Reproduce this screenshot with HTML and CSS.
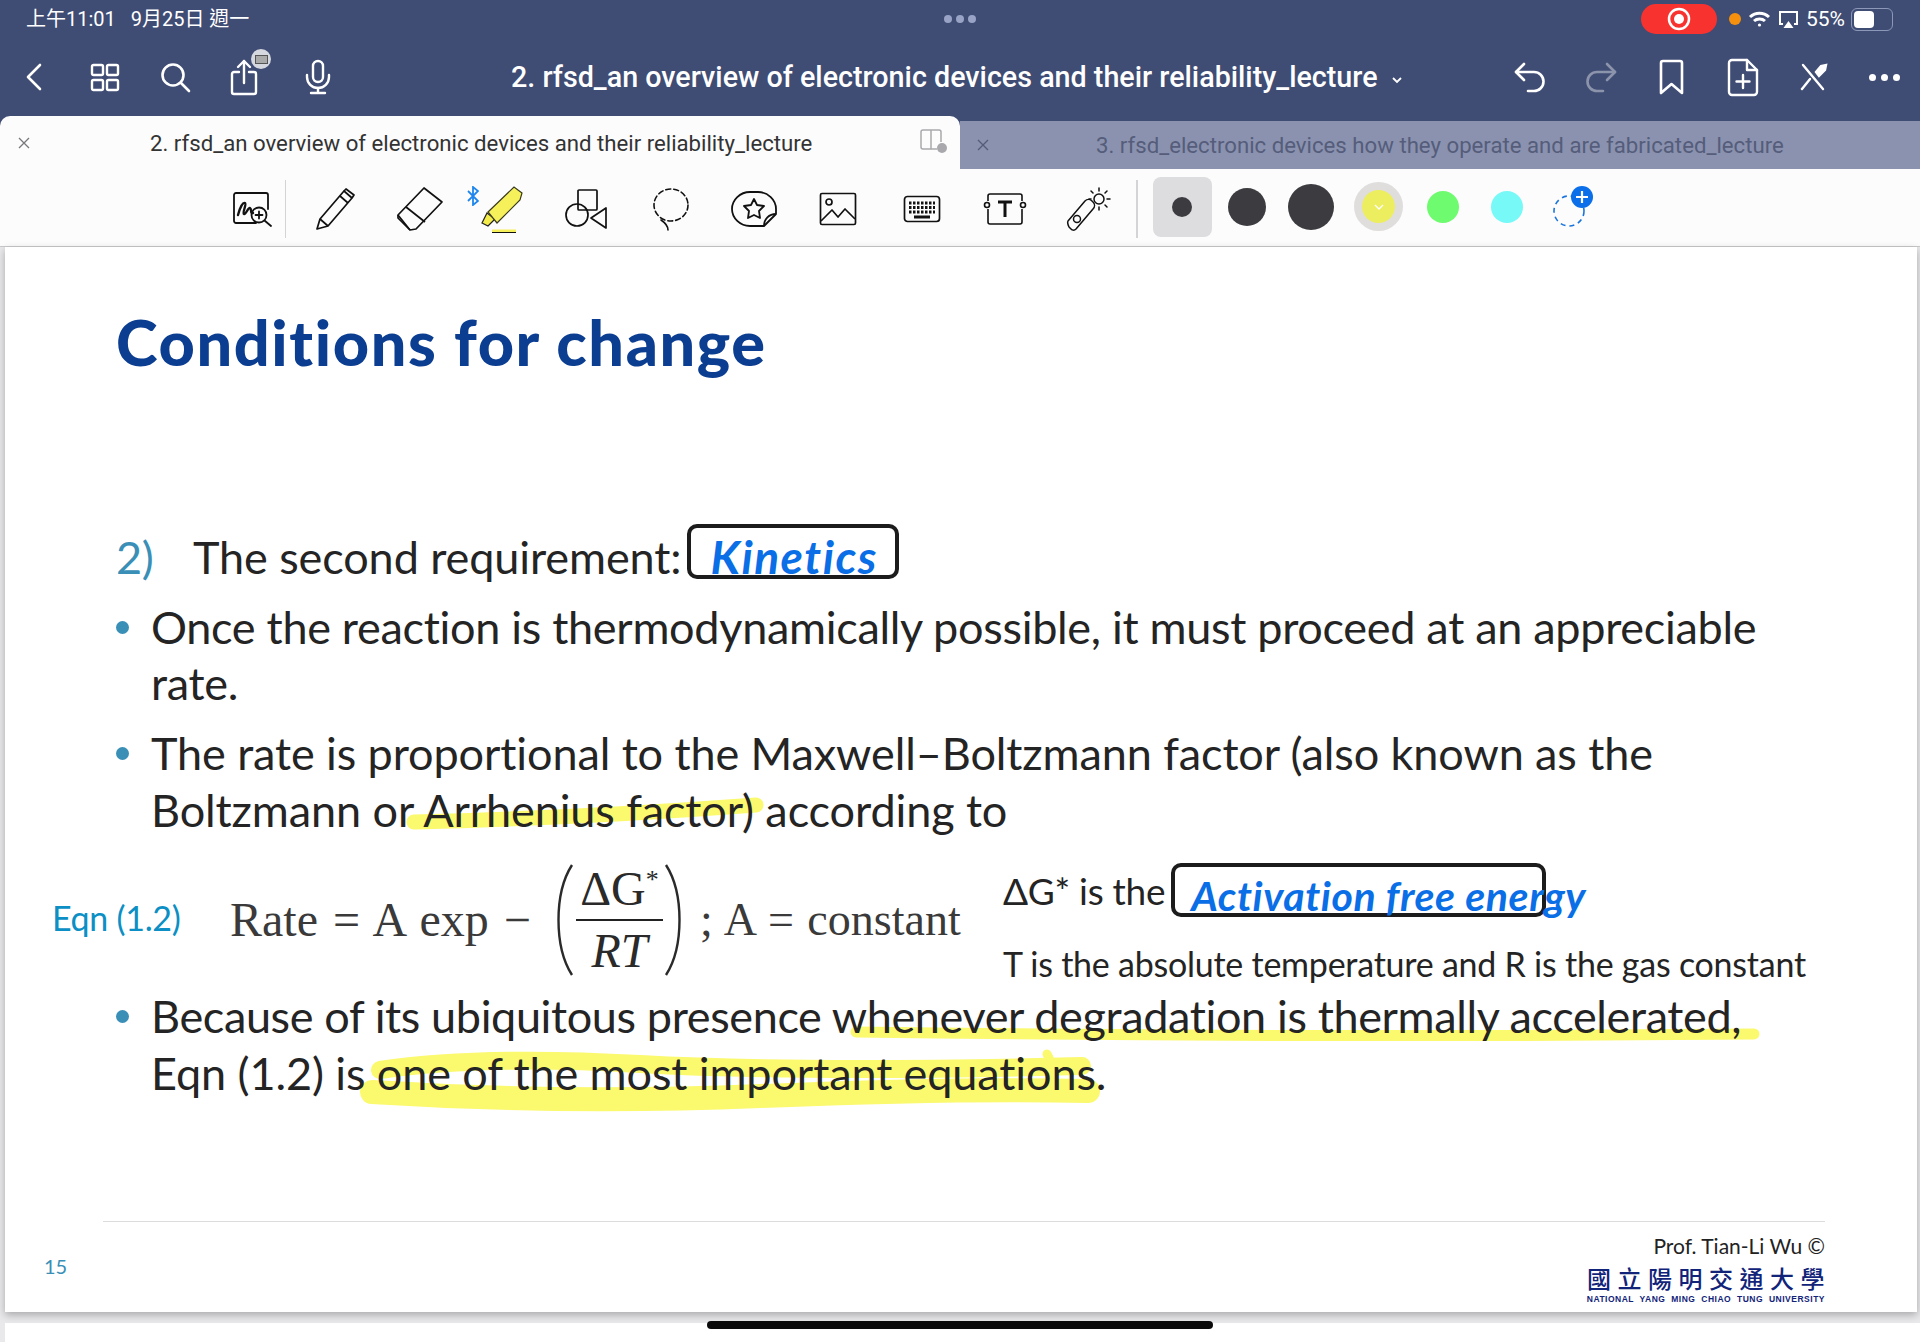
FILE: index.html
```html
<!DOCTYPE html>
<html lang="zh-Hant">
<head>
  <meta charset="UTF-8">
  <title>2. rfsd_an overview of electronic devices and their reliability_lecture</title>
  <link rel="stylesheet" href="styles.css">
</head>
<body>
  <header class="appbar">
    <!-- status bar -->
    <div class="status">
      <div class="status-time">上午11:01&nbsp;&nbsp; 9月25日 週一</div>
      <div class="status-dots"><i></i><i></i><i></i></div>
      <div class="status-right">
        <div class="rec-pill">
          <svg width="24" height="24" viewBox="0 0 24 24"><circle cx="12" cy="12" r="10" fill="none" stroke="#fff" stroke-width="2.5"/><circle cx="12" cy="12" r="5" fill="#fff"/></svg>
        </div>
        <span class="orange-dot"></span>
        <svg class="st-wifi" width="23" height="18" viewBox="0 0 23 18" fill="none" stroke="#fff" stroke-width="3"><path d="M2 7c5.500-5 13.500-5 19 0"/><path d="M6 11c3-2.700 8-2.700 11 0"/><circle cx="11.500" cy="15" r="1.600" fill="#fff" stroke="none"/></svg>
        <svg class="st-air" width="21" height="19" viewBox="0 0 21 19" fill="none" stroke="#fff" stroke-width="2"><path d="M5 14H2V2h17v12h-3"/><path d="M10.500 11l5 7h-10z" fill="#fff" stroke="none"/></svg>
        <span class="st-pct">55%</span>
        <div class="battery"><span></span></div>
      </div>
    </div>

    <!-- top navigation -->
    <nav class="nav">
      <div class="nav-group nav-left">
        <span class="nav-btn"><svg width="18" height="28" viewBox="0 0 18 28" fill="none" stroke="#fff" stroke-width="2.600" stroke-linecap="round" stroke-linejoin="round"><path d="M15 2L3 14l12 12"/></svg></span>
        <span class="nav-btn"><svg width="30" height="29" viewBox="0 0 30 29" fill="none" stroke="#fff" stroke-width="2.400"><rect x="2" y="2" width="11" height="10" rx="1.500"/><rect x="17" y="2" width="11" height="10" rx="1.500"/><rect x="2" y="17" width="11" height="10" rx="1.500"/><rect x="17" y="17" width="11" height="10" rx="1.500"/></svg></span>
        <span class="nav-btn"><svg width="32" height="31" viewBox="0 0 32 31" fill="none" stroke="#fff" stroke-width="2.600" stroke-linecap="round"><circle cx="13" cy="13" r="10.500"/><path d="M21 21l8 8"/></svg></span>
        <span class="nav-btn share-btn">
          <svg width="30" height="38" viewBox="0 0 30 38" fill="none" stroke="#fff" stroke-width="2.400" stroke-linecap="round" stroke-linejoin="round"><path d="M9 14H4a2 2 0 0 0-2 2v18a2 2 0 0 0 2 2h20a2 2 0 0 0 2-2V16a2 2 0 0 0-2-2h-5"/><path d="M14 25V3"/><path d="M8 9l6-6 6 6"/></svg>
          <span class="share-badge"><span></span></span>
        </span>
        <span class="nav-btn"><svg width="26" height="36" viewBox="0 0 26 36" fill="none" stroke="#fff" stroke-width="2.400" stroke-linecap="round"><rect x="8" y="2" width="10" height="21" rx="5"/><path d="M2 16v2a11 11 0 0 0 22 0v-2"/><path d="M13 29v5M6 34h14"/></svg></span>
      </div>
      <div class="nav-title">2. rfsd_an overview of electronic devices and their reliability_lecture
        <svg class="nav-caret" width="12" height="8" viewBox="0 0 12 8" fill="none" stroke="#fff" stroke-width="1.800"><path d="M2 2l4 4 4-4"/></svg>
      </div>
      <div class="nav-group">
        <span class="nav-btn"><svg width="34" height="31" viewBox="0 0 34 31" fill="none" stroke="#fff" stroke-width="2.600" stroke-linecap="round" stroke-linejoin="round"><path d="M11 2L3 10l8 8"/><path d="M3 10h18a9.500 9.500 0 0 1 0 19h-6"/></svg></span>
        <span class="nav-btn"><svg class="dim" width="34" height="31" viewBox="0 0 34 31" fill="none" stroke="#fff" stroke-width="2.600" stroke-linecap="round" stroke-linejoin="round"><path d="M23 2l8 8-8 8"/><path d="M31 10H13a9.500 9.500 0 0 0 0 19h6"/></svg></span>
        <span class="nav-btn"><svg width="27" height="36" viewBox="0 0 27 36" fill="none" stroke="#fff" stroke-width="2.600" stroke-linejoin="round"><path d="M3 4a2 2 0 0 1 2-2h17a2 2 0 0 1 2 2v30l-10.500-9L3 34z"/></svg></span>
        <span class="nav-btn"><svg width="32" height="39" viewBox="0 0 32 39" fill="none" stroke="#fff" stroke-width="2.400" stroke-linejoin="round" stroke-linecap="round"><path d="M20 2H5a3 3 0 0 0-3 3v29a3 3 0 0 0 3 3h22a3 3 0 0 0 3-3V12z"/><path d="M20 2v10h10"/><path d="M16 17v13M9.500 23.500h13"/></svg></span>
        <span class="nav-btn"><svg width="30" height="28" viewBox="0 0 30 28" fill="none" stroke="#fff" stroke-width="2.400" stroke-linecap="round"><path d="M4 2l20 24"/><path d="M3 26L11 16"/><path d="M17 9l5-6 5-1-1 5-6 6z" fill="#fff"/></svg></span>
        <span class="nav-btn"><span class="more"><i></i><i></i><i></i></span></span>
      </div>
    </nav>

    <!-- document tabs -->
    <div class="tabs">
      <div class="tab tab-active">
        <svg class="tab-x" width="12" height="12" viewBox="0 0 12 12" stroke="#77777c" stroke-width="1.300"><path d="M1 1l10 10M11 1L1 11"/></svg>
        <span class="tab-text">2. rfsd_an overview of electronic devices and their reliability_lecture</span>
        <svg class="tab-split" width="28" height="25" viewBox="0 0 28 25" fill="none" stroke="#a9a9ad" stroke-width="1.500"><path d="M12 2v19M18 21H4a2 2 0 0 1-2-2V4a2 2 0 0 1 2-2h16a2 2 0 0 1 2 2v10"/><circle cx="23" cy="20" r="5" fill="#a9a9ad" stroke="none"/></svg>
      </div>
      <div class="tab tab-off">
        <svg class="tab-x" width="12" height="12" viewBox="0 0 12 12" stroke="#535b78" stroke-width="1.300"><path d="M1 1l10 10M11 1L1 11"/></svg>
        <span class="tab-text">3. rfsd_electronic devices how they operate and are fabricated_lecture</span>
      </div>
    </div>
  </header>

  <!-- drawing tools -->
  <div class="tools">
    <span class="tool tool-first"><svg width="40" height="36" viewBox="0 0 40 36" fill="none" stroke="#111" stroke-width="1.800" stroke-linecap="round"><path d="M24 32H4a2 2 0 0 1-2-2V4a2 2 0 0 1 2-2h30a2 2 0 0 1 2 2v14"/><path d="M6 24c2-8 5-13 7-12s-3 10-1 11 4-7 6-6 0 6 3 5" stroke-width="2.400"/><circle cx="27" cy="24" r="7.500"/><path d="M32.500 29.500L39 35M27 20.500v7M23.500 24h7"/></svg></span>
    <span class="tool-sep"></span>
    <span class="tool"><svg width="42" height="44" viewBox="0 0 42 44" fill="none" stroke="#111" stroke-width="1.700" stroke-linejoin="round"><path d="M2 42l3-10L29 4l8 7-24 28z"/><path d="M5 32l8 7M29 4l2-2 8 6-2 3M25 9l8 7"/></svg></span>
    <span class="tool"><svg width="48" height="46" viewBox="0 0 48 46" fill="none" stroke="#111" stroke-width="1.700" stroke-linejoin="round"><path d="M2 29L28 2l18 14-26 27-6 1z"/><path d="M2 29l-0 3 12 12M10 21l19 15"/></svg></span>
    <span class="tool tool-marker">
      <svg class="bt" width="12" height="20" viewBox="0 0 12 20" fill="none" stroke="#1e86ee" stroke-width="1.800"><path d="M1 5l10 10-5 4V1l5 4L1 15"/></svg>
      <svg width="46" height="48" viewBox="0 0 46 48"><path d="M2 38l5-10 8 6-7 7z" fill="#f3ec4a" stroke="#222" stroke-width="1.200"/><path d="M8 27L34 2l8 6-2 7-23 23z" fill="#f6f15a" stroke="#3a3a20" stroke-width="1.200"/><path d="M12 46h24" stroke="#f6f15a" stroke-width="3"/><path d="M12 47.500h24" stroke="#111" stroke-width="1"/></svg>
    </span>
    <span class="tool"><svg width="44" height="42" viewBox="0 0 44 42" fill="none" stroke="#111" stroke-width="1.700" stroke-linejoin="round"><rect x="13" y="2" width="19" height="20" rx="1"/><circle cx="12" cy="27" r="11"/><path d="M41 20v20L26 30z"/></svg></span>
    <span class="tool"><svg width="40" height="44" viewBox="0 0 40 44" fill="none" stroke="#111" stroke-width="1.600" stroke-dasharray="5 3" stroke-linecap="round"><ellipse cx="20" cy="18" rx="17" ry="16"/><path d="M10 33c3 2 7 5 7 10" stroke-dasharray="none"/></svg></span>
    <span class="tool"><svg width="48" height="38" viewBox="0 0 48 38" fill="none" stroke="#111" stroke-width="1.800" stroke-linejoin="round"><path d="M34 36H20C10 36 2 28 2 19S10 2 20 2h8c10 0 18 8 18 17v5z"/><path d="M34 36c0-7 5-12 12-12"/><path d="M24 9l3 6 7 1-5 5 1 7-6-3-6 3 1-7-5-5 7-1z"/></svg></span>
    <span class="tool"><svg width="38" height="34" viewBox="0 0 38 34" fill="none" stroke="#111" stroke-width="1.700" stroke-linejoin="round"><rect x="1.500" y="1.500" width="35" height="31" rx="1.500"/><circle cx="10" cy="10" r="3"/><path d="M2 29l11-11 6 7 7-8 10 10"/></svg></span>
    <span class="tool"><svg width="38" height="28" viewBox="0 0 38 28" fill="none" stroke="#111" stroke-width="1.700"><rect x="1.500" y="1.500" width="35" height="25" rx="3"/><path d="M6 8h26M6 12.500h26M6 17h26" stroke-width="3" stroke-dasharray="2.500 1.500"/><path d="M11 22h16" stroke-width="3"/></svg></span>
    <span class="tool"><svg width="44" height="34" viewBox="0 0 44 34" fill="none" stroke="#111" stroke-width="1.600" stroke-linejoin="round"><path d="M5 9V4a2 2 0 0 1 2-2h30a2 2 0 0 1 2 2v5M39 17v13a2 2 0 0 1-2 2H7a2 2 0 0 1-2-2V17"/><circle cx="4" cy="13" r="2.500"/><circle cx="40" cy="13" r="2.500"/><path d="M15 10h14M22 10v15" stroke-width="3"/></svg></span>
    <span class="tool"><svg width="46" height="44" viewBox="0 0 46 44" fill="none" stroke="#111" stroke-width="1.500" stroke-linecap="round" stroke-linejoin="round"><path d="M2 34L19 14c2-2 5-2 7 0l1 1c2 2 2 5 0 7L10 42c-2 2-4 1-5 0l-2-2c-1-2-2-4-1-6z"/><circle cx="11" cy="32" r="3.500"/><circle cx="33" cy="12" r="5"/><path d="M33 1v3M33 20v3M44 12h-3M25 12h-2M41 4l-2 2M41 20l-2-2M25 4l2 2"/></svg></span>
    <span class="tool-sep tool-sep2"></span>
    <div class="swatches">
      <span class="swatch swatch-on"><i class="dot-s"></i></span>
      <span class="swatch"><i class="dot-m"></i></span>
      <span class="swatch"><i class="dot-l"></i></span>
      <span class="swatch swatch-y"><i class="dot-y">
        <svg width="10" height="6" viewBox="0 0 10 6" fill="none" stroke="#fff" stroke-width="1.300"><path d="M1 1l4 4 4-4"/></svg>
      </i></span>
      <span class="swatch"><i class="dot-g"></i></span>
      <span class="swatch"><i class="dot-c"></i></span>
      <span class="swatch swatch-add">
        <svg width="44" height="44" viewBox="0 0 44 44" fill="none"><circle cx="18" cy="26" r="15" stroke="#1b74dc" stroke-width="1.600" stroke-dasharray="5 4"/><circle cx="31" cy="12" r="11" fill="#0a6fe8"/><path d="M31 6v12M25 12h12" stroke="#fff" stroke-width="2.200"/></svg>
      </span>
    </div>
  </div>

  <main class="slide">
    <!-- highlighter marks, under the text -->
    <svg class="ink" width="1912" height="1065" viewBox="5 247 1912 1065" fill="none" stroke="#fbf96e" stroke-linecap="round">
      <path d="M414 822Q580 818 756 805" stroke-width="15"/>
      <path d="M856 1032Q1300 1038 1754 1034" stroke-width="11"/>
      <path d="M372 1092Q560 1104 760 1096T1088 1091" stroke-width="24"/>
      <path d="M380 1070Q480 1055 640 1064T1082 1066" stroke-width="18"/>
      <path d="M1047 1054Q1056 1070 1050 1084" stroke-width="9"/>
    </svg>

    <h1 class="slide-title">Conditions for change</h1>

    <div class="req">
      <span class="req-num">2)</span>
      <span class="req-text">The second requirement:</span>
      <span class="ink-box ink-box-k"><span class="hand hand-k">Kinetics</span></span>
    </div>

    <div class="bullet bullet-1"><i></i><p>Once the reaction is thermodynamically possible, it must proceed at an appreciable<br>rate.</p></div>
    <div class="bullet bullet-2"><i></i><p>The rate is proportional to the Maxwell–Boltzmann factor (also known as the<br>Boltzmann or Arrhenius factor) according to</p></div>

    <div class="eq">
      <span class="eq-label">Eqn (1.2)</span>
      <div class="formula">
        <span class="f-lead">Rate = A exp −</span>
        <svg class="paren" width="27" height="114" viewBox="0 0 27 114" fill="none" stroke="#2a2a2a" stroke-width="2.400"><path d="M24 2C6 30 6 84 24 112"/></svg>
        <span class="frac"><span class="frac-top">ΔG<sup>*</sup></span><span class="frac-bot">RT</span></span>
        <svg class="paren" width="27" height="114" viewBox="0 0 27 114" fill="none" stroke="#2a2a2a" stroke-width="2.400"><path d="M3 2C21 30 21 84 3 112"/></svg>
        <span class="f-tail">; A = constant</span>
      </div>
      <div class="eq-notes">
        <div class="note-1"><span>ΔG* is the</span><span class="ink-box ink-box-a"><span class="hand hand-a">Activation free energy</span></span></div>
        <div class="note-2">T is the absolute temperature and R is the gas constant</div>
      </div>
    </div>

    <div class="bullet bullet-3"><i></i><p><span class="line-tight">Because of its ubiquitous presence whenever degradation is thermally accelerated,</span><br>Eqn (1.2) is one of the most important equations.</p></div>

    <footer class="slide-foot">
      <div class="foot-row">
        <span class="page-no">15</span>
        <div class="foot-right">
          <div class="prof">Prof. Tian-Li Wu ©</div>
          <div class="uni-zh">國立陽明交通大學</div>
          <div class="uni-en">NATIONAL YANG MING CHIAO TUNG UNIVERSITY</div>
        </div>
      </div>
    </footer>
  </main>

  <div class="next-page"></div>
  <div class="home-bar"></div>
</body>
</html>
```

FILE: styles.css
```css
html, body {
  margin: 0;
  height: 1342px;
  overflow: hidden;
}
body {
  position: relative;
  background: #e9e9ec;
  font-family: Roboto, "Noto Sans CJK TC", sans-serif;
}
i {
  display: block;
}

/* app bar */
.appbar {
  background: #3f4c74;
  color: #fff;
}
.status {
  height: 38px;
  padding: 0 27px 0 26px;
  display: grid;
  grid-template-columns: 1fr auto 1fr;
  align-items: center;
}
.status-time {
  margin-top: -3px;
  font-size: 20px;
  white-space: nowrap;
}
.status-dots {
  display: flex;
  gap: 4px;
}
.status-dots i {
  width: 8px;
  height: 8px;
  border-radius: 50%;
  background: #98a3c6;
}
.status-right {
  display: flex;
  align-items: center;
  justify-content: flex-end;
}
.rec-pill {
  width: 76px;
  height: 30px;
  border-radius: 15px;
  background: #f8332f;
  display: flex;
  align-items: center;
  justify-content: center;
}
.orange-dot {
  width: 12px;
  height: 12px;
  margin-left: 12px;
  border-radius: 50%;
  background: #f5900e;
}
.st-wifi {
  margin-left: 7px;
}
.st-air {
  margin-left: 7px;
}
.st-pct {
  margin-left: 7px;
  font-size: 21px;
}
.battery {
  width: 36px;
  height: 17px;
  margin-left: 6px;
  padding: 2px;
  border: 1px solid #8d97b8;
  border-radius: 6px;
  box-sizing: content-box;
}
.battery span {
  display: block;
  width: 20px;
  height: 17px;
  border-radius: 4px;
  background: #fff;
}

.nav {
  height: 78px;
  display: flex;
  align-items: center;
}
.nav-group {
  display: flex;
}
.nav-left {
  margin-left: -2px;
}
.nav-btn {
  position: relative;
  width: 71px;
  height: 44px;
  display: flex;
  align-items: center;
  justify-content: center;
}
.share-btn svg {
  margin-right: 3px;
}
.dim {
  opacity: .4;
}
.share-badge {
  position: absolute;
  top: -6px;
  left: 40px;
  width: 20px;
  height: 20px;
  border-radius: 50%;
  background: #d6d8e0;
  display: flex;
  align-items: center;
  justify-content: center;
}
.share-badge span {
  width: 11px;
  height: 7px;
  border: 1px solid #555;
  background: #aaa;
}
.more {
  display: flex;
  gap: 5px;
}
.more i {
  width: 7px;
  height: 7px;
  border-radius: 50%;
  background: #fff;
}
.nav-title {
  flex: 1;
  padding-left: 158px;
  font-size: 28.700px;
  font-weight: 500;
  white-space: nowrap;
}
.nav-caret {
  margin-left: 6px;
  vertical-align: 3px;
}

.tabs {
  height: 53px;
  display: flex;
}
.tab {
  width: 960px;
  display: flex;
  align-items: center;
  box-sizing: border-box;
  position: relative;
  font-size: 22.200px;
  white-space: nowrap;
}
.tab-active {
  background: #fcfcfd;
  color: #333;
  border-radius: 10px 10px 0 0;
}
.tab-off {
  margin-top: 5px;
  background: #8a92b0;
  color: #555d7a;
}
.tab-x {
  position: absolute;
  left: 18px;
  top: 50%;
  margin-top: -6px;
}
.tab-off .tab-x {
  left: 17px;
}
.tab-active .tab-text {
  margin-left: 150px;
}
.tab-off .tab-text {
  margin-left: 136px;
}
.tab-split {
  position: absolute;
  left: 919px;
  top: 12px;
}

/* drawing tools */
.tools {
  height: 78px;
  box-sizing: border-box;
  padding: 2px 0 0 214px;
  background: #fcfcfd;
  border-bottom: 1px solid #c9c9cc;
  display: flex;
  align-items: center;
}
.tool {
  position: relative;
  width: 83.700px;
  height: 50px;
  flex: none;
  display: flex;
  align-items: center;
  justify-content: center;
}
.tool-first {
  width: 71px;
}
.tool-first svg {
  margin-left: 4px;
}
.tool-sep {
  width: 1px;
  height: 58px;
  margin-right: 8px;
  background: #d4d4d6;
  flex: none;
}
.tool-sep2 {
  margin-left: 5px;
  margin-right: 15px;
  width: 2px;
}
.bt {
  position: absolute;
  left: 6px;
  top: 2px;
}
.swatches {
  display: flex;
  align-items: center;
  margin-top: -4px;
}
.swatch {
  width: 64px;
  height: 60px;
  display: flex;
  align-items: center;
  justify-content: center;
  flex: none;
}
.swatch-on {
  width: 59px;
  margin-right: 3px;
  background: #dddde0;
  border-radius: 8px;
}
.swatch i {
  border-radius: 50%;
}
.dot-s {
  width: 20px;
  height: 20px;
  background: #3c3c40;
}
.dot-m {
  width: 38px;
  height: 38px;
  background: #3c3c40;
}
.dot-l {
  width: 46px;
  height: 46px;
  background: #3c3c40;
}
.swatch-y {
  margin-left: 4px;
}
.dot-y {
  width: 33px;
  height: 33px;
  background: #eded60;
  box-shadow: 0 0 0 8px #dfdedd;
  display: flex;
  align-items: center;
  justify-content: center;
}
.dot-g {
  width: 32px;
  height: 32px;
  background: #6ffb6f;
}
.dot-c {
  width: 32px;
  height: 32px;
  background: #77f9f7;
}
.swatch-add {
  margin-left: 2px;
}

/* slide */
.slide {
  position: relative;
  width: 1912px;
  height: 1065px;
  margin-left: 5px;
  padding: 60px 0 0 111px;
  box-sizing: border-box;
  background: #fff;
  box-shadow: 0 3px 8px rgba(0, 0, 0, .28);
  display: flex;
  flex-direction: column;
  font-family: Lato, sans-serif;
  font-size: 45px;
  letter-spacing: -.3px;
  font-variant-ligatures: none;
  color: #242424;
}
.ink {
  position: absolute;
  left: 0;
  top: 0;
}
.slide > *:not(.ink) {
  position: relative;
}
.slide-title {
  margin: 0 0 151px;
  font-size: 63px;
  line-height: 70px;
  font-weight: 900;
  letter-spacing: 1.600px;
  color: #0b3d91;
}
.req {
  height: 58px;
  line-height: 58px;
  display: flex;
  white-space: nowrap;
}
.req-num {
  width: 77px;
  color: #3a8fb7;
}
.req-text {
  letter-spacing: -.1px;
}
.ink-box {
  display: block;
  position: relative;
  border: 4px solid #1c1c1c;
  border-radius: 10px;
  box-sizing: border-box;
  white-space: nowrap;
}
.ink-box-k {
  width: 212px;
  height: 55px;
  margin: -4px 0 0 6px;
}
.ink-box-a {
  width: 375px;
  height: 54px;
  margin-left: 6px;
}
.hand {
  position: absolute;
  left: 16px;
  top: 4px;
  line-height: 50px;
  font-size: 44px;
  font-style: italic;
  font-weight: 700;
  color: #0a6ee6;
}
.hand-k {
  left: 19px;
  font-size: 46px;
  letter-spacing: 1.500px;
}
.hand-a {
  font-size: 41px;
  letter-spacing: .6px;
}
.bullet {
  display: flex;
  margin-top: 13px;
}
.bullet i {
  width: 13px;
  height: 13px;
  margin: 22px 22px 0 0;
  border-radius: 50%;
  background: #3a8fb7;
  flex: none;
}
.bullet p {
  margin: 0;
  line-height: 57px;
  white-space: nowrap;
}
.bullet-1 p {
  line-height: 56px;
}
.bullet-2 {
  margin-top: 14px;
}
.bullet-2 p {
  letter-spacing: -.1px;
}
.bullet-3 p {
  letter-spacing: -.1px;
}
.line-tight {
  letter-spacing: -.37px;
}

/* equation row */
.eq {
  height: 141px;
  margin-left: -64px;
  margin-top: 8px;
  display: flex;
  align-items: center;
  white-space: nowrap;
}
.eq + .bullet {
  margin-top: 0;
}
.eq-label {
  width: 178px;
  flex: none;
  font-size: 34px;
  color: #0b8fc4;
}
.formula {
  width: 773px;
  flex: none;
  display: flex;
  align-items: center;
  margin-top: 4px;
  font-family: "Liberation Serif", serif;
  font-size: 48px;
  letter-spacing: 0;
  color: #3a3a3a;
}
.f-lead {
  width: 318px;
  flex: none;
  word-spacing: 3px;
}
.f-tail {
  margin-left: 10px;
  font-size: 46px;
  word-spacing: 2px;
}
.paren {
  flex: none;
}
.frac {
  display: flex;
  flex-direction: column;
  align-items: center;
  width: 87px;
  margin: 5px 0 0 1px;
  color: #2a2a2a;
}
.frac-top {
  width: 100%;
  padding-bottom: 5px;
  border-bottom: 2px solid #222;
  text-align: center;
  line-height: 50px;
}
.frac-top sup {
  font-size: 26px;
  line-height: 0;
}
.frac-bot {
  font-style: italic;
  line-height: 60px;
}
.eq-notes {
  flex: none;
  margin-top: 14px;
}
.note-1 {
  display: flex;
  align-items: center;
  font-size: 37px;
}
.note-2 {
  margin-top: 25px;
  font-size: 34px;
  letter-spacing: -.24px;
  line-height: 44px;
}

/* slide footer */
.slide-foot {
  margin: auto 92px 0 -13px;
  padding-bottom: 7px;
  border-top: 1px solid #dcdcdc;
  letter-spacing: 0;
}
.foot-row {
  display: flex;
  justify-content: space-between;
  align-items: center;
}
.page-no {
  margin: 5px 0 0 -59px;
  font-size: 20px;
  color: #3a8fb7;
}
.foot-right {
  padding-top: 11px;
  text-align: right;
}
.prof {
  font-size: 21px;
  line-height: 26px;
  color: #222;
}
.uni-zh {
  margin-top: 5px;
  margin-right: -6px;
  font-family: "Noto Sans CJK TC", sans-serif;
  font-size: 24px;
  line-height: 28px;
  font-weight: 500;
  letter-spacing: 6.500px;
  color: #12237a;
}
.uni-en {
  margin-top: 1px;
  font-family: "Liberation Sans", sans-serif;
  font-size: 8.500px;
  line-height: 12px;
  font-weight: 700;
  letter-spacing: .5px;
  word-spacing: 3px;
  color: #12237a;
}

.next-page {
  height: 19px;
  margin: 11px 0 0 5px;
  background: #fff;
}
.home-bar {
  position: absolute;
  left: 707px;
  top: 1321px;
  width: 506px;
  height: 8px;
  border-radius: 4px;
  background: #0a0a0a;
}
```
